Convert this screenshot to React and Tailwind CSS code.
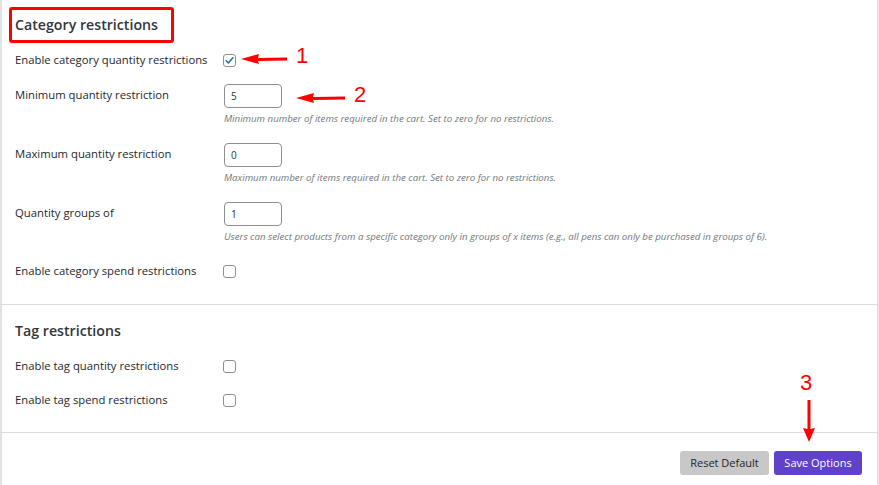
import React from "react";

const font = { fontFamily: '"Open Sans", "Noto Sans", sans-serif' };

function Checkbox({ checked }) {
  return (
    <span className="relative inline-flex h-[13px] w-[13px] items-center justify-center rounded-[3px] border border-[#8c8f94] bg-white">
      {checked && (
        <svg width="11" height="11" viewBox="0 0 20 20" className="absolute">
          <path d="M4 10.5 L8 14.5 L16 5" fill="none" stroke="#2271b1" strokeWidth="3" strokeLinecap="round" strokeLinejoin="round" />
        </svg>
      )}
    </span>
  );
}

function CheckRow({ label, checked, mt }) {
  return (
    <div className={`flex h-[16px] items-center ${mt}`}>
      <div className="w-[208px] text-[11.3px] leading-[16px] text-[#23282d]">{label}</div>
      <Checkbox checked={checked} />
    </div>
  );
}

function InputRow({ label, value, desc, mt }) {
  return (
    <div className={`flex items-start ${mt}`}>
      <div className="w-[209px] pt-[3px] text-[11.3px] leading-[16px] text-[#23282d]">{label}</div>
      <div className="flex flex-col">
        <div className="flex h-[24px] w-[58px] items-center rounded-[4px] border border-[#8c8f94] bg-white pl-[6px] text-[10px] text-[#2c3338]">
          {value}
        </div>
        <div className="mt-[5px] text-[9.7px] italic leading-[12px] text-[#72777c] whitespace-nowrap">{desc}</div>
      </div>
    </div>
  );
}

export default function App() {
  return (
    <div style={font} className="relative h-[485px] w-[879px] overflow-hidden bg-white">
      <div className="flex h-full flex-col border-l-2 border-r-2 border-[#e2e2e2]">
        <div className="pl-[13px]">
          <div className="mt-[7px] ml-[-6px] flex h-[36px] w-[165px] items-center rounded-[3px] border-[3px] border-[#ff0000] pl-[3px]">
            <span className="text-[14.2px] font-semibold text-[#32373c]">Category restrictions</span>
          </div>
          <CheckRow mt="mt-[9px]" label="Enable category quantity restrictions" checked />
          <InputRow mt="mt-[16px]" label="Minimum quantity restriction" value="5" desc="Minimum number of items required in the cart. Set to zero for no restrictions." />
          <InputRow mt="mt-[18px]" label="Maximum quantity restriction" value="0" desc="Maximum number of items required in the cart. Set to zero for no restrictions." />
          <InputRow mt="mt-[18px]" label="Quantity groups of" value="1" desc="Users can select products from a specific category only in groups of x items (e.g., all pens can only be purchased in groups of 6)." />
          <CheckRow mt="mt-[20px]" label="Enable category spend restrictions" />
        </div>
        <div className="mt-[25px] border-t border-[#dcdcde]" />
        <div className="pl-[13px]">
          <div className="mt-[16px] text-[14.2px] font-semibold leading-[20px] text-[#32373c]">Tag restrictions</div>
          <CheckRow mt="mt-[17px]" label="Enable tag quantity restrictions" />
          <CheckRow mt="mt-[18px]" label="Enable tag spend restrictions" />
        </div>
        <div className="mt-[24px] border-t border-[#dcdcde]" />
        <div className="mt-[18px] flex justify-end gap-[5px] pr-[15px]">
          <button className="h-[24px] w-[89px] rounded-[3px] bg-[#c8c8c8] text-[11px] text-[#1d2327]">Reset Default</button>
          <button className="h-[24px] w-[88px] rounded-[3px] bg-[#6041c9] text-[11px] text-white">Save Options</button>
        </div>
      </div>

      {/* Annotation arrows */}
      <svg className="absolute left-0 top-0" width="879" height="485" style={{ pointerEvents: "none" }}>
        <polygon points="241,59 259,54 258,58 287,57.5 287,60.5 258,61 259,64" fill="#ff0000" />
        <polygon points="296,98 314,93 313,97 345,96.5 345,99.5 313,100 314,103" fill="#ff0000" />
        <polygon points="809,442 803,428 807.5,429 807.5,400 810.5,400 810.5,429 815,428" fill="#ff0000" />
      </svg>
      <span className="absolute left-[296px] top-[43px] text-[22px] leading-[26px] text-[#ff0000]" style={{ fontFamily: '"Liberation Sans", Arial, sans-serif' }}>1</span>
      <span className="absolute left-[354px] top-[82px] text-[22px] leading-[26px] text-[#ff0000]" style={{ fontFamily: '"Liberation Sans", Arial, sans-serif' }}>2</span>
      <span className="absolute left-[800px] top-[370px] text-[22px] leading-[26px] text-[#ff0000]" style={{ fontFamily: '"Liberation Sans", Arial, sans-serif' }}>3</span>
    </div>
  );
}
